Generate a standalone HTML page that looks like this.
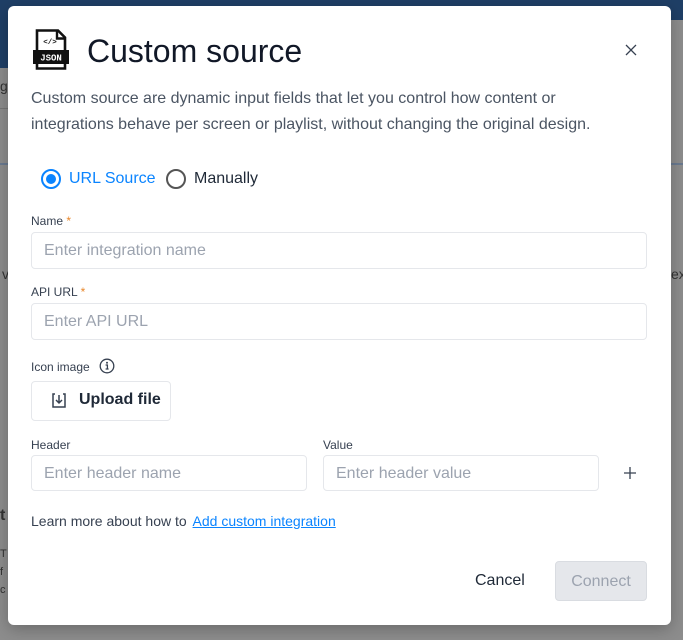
<!DOCTYPE html>
<html><head><meta charset="utf-8"><style>
*{box-sizing:border-box;margin:0;padding:0}
body{width:683px;height:640px;overflow:hidden;background:#8d8d8d;font-family:"Liberation Sans",Arial,sans-serif;position:relative}
.top{position:absolute;left:0;top:0;width:683px;height:20px;background:#1f3f66}
.lb{position:absolute;left:0;top:0;width:8px;height:68px;background:#1f3f66}
.bg{position:absolute;color:#333;font-size:14px}
.modal{position:absolute;left:8px;top:6px;width:663px;height:619px;background:#fff;border-radius:6px;box-shadow:0 4px 16px rgba(0,0,0,.25)}
.abs{position:absolute}
h1{position:absolute;left:79px;top:27px;font-size:32px;font-weight:400;color:#111827}
.desc{left:23px;top:80px;font-size:16px;line-height:26px;color:#4b5563;white-space:nowrap}
.lbl{font-size:12px;color:#374151}
.star{color:#e8862a}
.inp{position:absolute;border:1px solid #e5e7eb;border-radius:4px;height:37px;font-size:16px;color:#9ca3af;padding:9px 12px}
</style></head><body>
<div class="top"></div><div class="lb"></div>
<div class="bg" style="left:0;top:78px;">g</div>
<div class="abs" style="left:0;top:108px;width:8px;height:1px;background:#777"></div>
<div class="abs" style="left:0;top:163px;width:8px;height:2px;background:#6a7a90"></div>
<div class="abs" style="left:671px;top:163px;width:12px;height:2px;background:#6a7a90"></div>
<div class="bg" style="left:2px;top:266px">v</div>
<div class="bg" style="left:671px;top:266px">ex</div>
<div class="bg" style="left:0;top:507px;font-weight:bold;font-size:16px">t</div>
<div class="bg" style="left:0;top:545px;font-size:11px;line-height:18px">T<br>f<br>c</div>
<div class="modal">
<svg class="abs" style="left:24px;top:23px" width="40" height="42" viewBox="0 0 40 42">
<path d="M5 1.5 H26 L33 8.5 V39.5 H5 Z" fill="none" stroke="#111" stroke-width="2.6"/>
<path d="M25 1.5 V9.5 H33" fill="none" stroke="#111" stroke-width="2.4"/>
<rect x="1" y="21" width="36" height="14" fill="#111"/>
<text x="19" y="31.5" font-size="9" font-weight="bold" fill="#fff" text-anchor="middle" font-family="Liberation Mono,monospace">JSON</text>
<text x="18" y="15" font-size="7.5" font-weight="bold" fill="#111" text-anchor="middle" font-family="Liberation Mono,monospace">&lt;/&gt;</text>
</svg>
<h1>Custom source</h1>
<svg class="abs" style="left:617px;top:38px" width="12" height="12" viewBox="0 0 12 12"><path d="M1 1L11 11M11 1L1 11" stroke="#374151" stroke-width="1.3"/></svg>
<div class="abs desc">Custom source are dynamic input fields that let you control how content or<br>integrations behave per screen or playlist, without changing the original design.</div>
<div class="abs" style="left:33px;top:163px;width:20px;height:20px;border:2px solid #0a84ff;border-radius:50%"><div style="margin:3px;width:10px;height:10px;border-radius:50%;background:#0a84ff"></div></div>
<div class="abs" style="left:61px;top:164px;font-size:16px;color:#0a84ff">URL Source</div>
<div class="abs" style="left:158px;top:163px;width:20px;height:20px;border:2px solid #555;border-radius:50%"></div>
<div class="abs" style="left:186px;top:164px;font-size:16px;color:#1f2937">Manually</div>
<div class="abs lbl" style="left:23px;top:208px">Name <span class="star">*</span></div>
<div class="inp" style="left:23px;top:226px;width:616px">Enter integration name</div>
<div class="abs lbl" style="left:23px;top:279px">API URL <span class="star">*</span></div>
<div class="inp" style="left:23px;top:297px;width:616px">Enter API URL</div>
<div class="abs lbl" style="left:23px;top:354px">Icon image</div>
<svg class="abs" style="left:91px;top:352px" width="16" height="16" viewBox="0 0 16 16"><circle cx="8" cy="8" r="6.8" fill="none" stroke="#374151" stroke-width="1.3"/><circle cx="8" cy="4.8" r="1" fill="#374151"/><path d="M6.6 7H8.4V11M6.6 11H9.6" stroke="#374151" stroke-width="1.3" fill="none"/></svg>
<div class="abs" style="left:23px;top:375px;width:140px;height:40px;border:1px solid #e5e7eb;border-radius:4px"></div>
<svg class="abs" style="left:43px;top:386px" width="16" height="17" viewBox="0 0 16 17"><path d="M4 2H2V15H14V2H12" fill="none" stroke="#374151" stroke-width="1.5"/><path d="M8 3V11M5 8L8 11L11 8" fill="none" stroke="#374151" stroke-width="1.5"/></svg>
<div class="abs" style="left:71px;top:385px;font-size:16px;font-weight:bold;color:#1f2937">Upload file</div>
<div class="abs lbl" style="left:23px;top:432px">Header</div>
<div class="inp" style="left:23px;top:449px;width:276px;height:36px">Enter header name</div>
<div class="abs lbl" style="left:315px;top:432px">Value</div>
<div class="inp" style="left:315px;top:449px;width:276px;height:36px">Enter header value</div>
<svg class="abs" style="left:615px;top:460px" width="14" height="14" viewBox="0 0 14 14"><path d="M7 1V13M1 7H13" stroke="#374151" stroke-width="1.3"/></svg>
<div class="abs" style="left:23px;top:507px;font-size:14px;color:#374151">Learn more about how to <span style="color:#0a84ff;text-decoration:underline;margin-left:2px">Add custom integration</span></div>
<div class="abs" style="left:467px;top:566px;font-size:16px;color:#1f2937">Cancel</div>
<div class="abs" style="left:547px;top:555px;width:92px;height:40px;background:#e5e7eb;border:1px solid #d9dce1;border-radius:4px;font-size:16px;color:#9ca3af;text-align:center;line-height:40px">Connect</div>
</div>
</body></html>
